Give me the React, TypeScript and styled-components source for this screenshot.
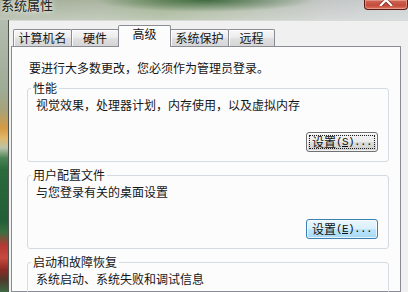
import styled, { createGlobalStyle } from "styled-components";

const GlobalStyle = createGlobalStyle`
  html, body {
    margin: 0;
    padding: 0;
  }
  body {
    width: 408px;
    height: 292px;
    overflow: hidden;
    background: #f0f0f0;
    font-family: "Noto Sans CJK SC", "Noto Sans", sans-serif;
    color: #161616;
  }
`;

const Window = styled.div`
  width: 408px;
  height: 292px;
  display: flex;
  flex-direction: column;
  overflow: hidden;
`;

const TitleBar = styled.div`
  height: 20px;
  flex: none;
  display: flex;
  align-items: flex-start;
  background:
    radial-gradient(110px 12px at 205px 0px, rgba(38, 88, 40, 0.8), rgba(38, 88, 40, 0) 100%),
    linear-gradient(180deg, rgba(255, 255, 255, 0) 0%, rgba(255, 255, 255, 0.3) 100%),
    linear-gradient(90deg, #a3ad98 0%, #aab5a0 25%, #9fb08f 40%, #b3bcab 60%, #c3c7c6 80%, #cbcfd0 100%);
`;

const Title = styled.div`
  font-size: 13px;
  line-height: 16px;
  margin: -3px 0 0 1px;
  color: #1c2320;
  text-shadow: 0 0 4px rgba(255, 255, 255, 0.9), 0 0 9px rgba(255, 255, 255, 0.7);
`;

const CloseButton = styled.div`
  margin-left: auto;
  width: 44px;
  height: 10px;
  box-sizing: border-box;
  display: flex;
  justify-content: center;
  align-items: flex-start;
  border: 1px solid #5c1a13;
  border-top: none;
  border-radius: 0 0 4px 4px;
  background: linear-gradient(180deg, #cf6a58 0%, #c54a3a 60%, #d97a62 100%);
  box-shadow: inset 0 0 0 1px rgba(255, 210, 200, 0.4);
`;

const Body = styled.div`
  flex: 1;
  min-height: 0;
  display: flex;
`;

const LeftFrame = styled.div`
  width: 8px;
  flex: none;
  border-right: 1px solid #4d554d;
  background: linear-gradient(
    180deg,
    #b4bcb0 0px,
    #9eab95 70px,
    #a7a27a 90px,
    #d49a45 108px,
    #e0b868 118px,
    #b9c2aa 128px,
    #4c8454 138px,
    #2a6a3c 150px,
    #235e36 200px,
    #3b6e40 212px,
    #b33834 225px,
    #c8493e 238px,
    #8a2a24 250px,
    #4e3a2c 260px,
    #3d6a44 272px
  );
`;

const Client = styled.div`
  flex: 1;
  min-width: 0;
  display: flex;
  flex-direction: column;
  background: #f0f0f0;
  border-top: 1px solid #d7dbd8;
  padding: 4px 7px 0 2px;
`;

const TabRow = styled.div`
  display: flex;
  align-items: flex-end;
  padding-left: 2px;
  position: relative;
  z-index: 1;
`;

const Tab = styled.div<{ $active?: boolean; $w: number }>`
  width: ${(p) => p.$w}px;
  box-sizing: border-box;
  margin-left: -1px;
  margin-bottom: ${(p) => (p.$active ? "-1px" : "0")};
  padding: 1px 0 ${(p) => (p.$active ? "6px" : "1px")};
  border: 1px solid #898c95;
  border-bottom: none;
  border-radius: 2px 2px 0 0;
  font-size: 12px;
  line-height: 14px;
  text-align: center;
  white-space: nowrap;
  position: relative;
  z-index: ${(p) => (p.$active ? 2 : 1)};
  background: ${(p) =>
    p.$active
      ? "#fcfcfc"
      : "linear-gradient(180deg, #f7f7f7 0%, #ececec 45%, #dfdfdf 55%, #d6d6d6 100%)"};
  box-shadow: ${(p) =>
    p.$active ? "none" : "inset 1px 1px 0 rgba(255, 255, 255, 0.85)"};

  &:first-child {
    margin-left: 0;
  }
`;

const Panel = styled.div`
  flex: 1;
  min-height: 0;
  display: flex;
  flex-direction: column;
  border: 1px solid #898c95;
  background: #fcfcfc;
`;

const Intro = styled.div`
  font-size: 12px;
  line-height: 14px;
  margin: 14px 0 0 17px;
  white-space: nowrap;
`;

const GroupBox = styled.fieldset`
  margin: 6px 11px 0 15px;
  padding: 3px 0 9px 8px;
  min-width: 0;
  border: 1px solid #d5dbe0;
  border-radius: 3px;
`;

const Legend = styled.legend`
  font-size: 12px;
  line-height: 14px;
  padding: 0 2px;
  margin-left: -5px;
`;

const Desc = styled.div`
  font-size: 12px;
  line-height: 14px;
  white-space: nowrap;
`;

const ButtonRow = styled.div`
  display: flex;
  justify-content: flex-end;
  padding-right: 10px;
  margin-top: 20px;
`;

const Button = styled.button<{ $focused?: boolean; $hover?: boolean }>`
  width: 72px;
  height: 20px;
  box-sizing: border-box;
  padding: 0;
  display: flex;
  align-items: center;
  justify-content: center;
  font-family: "Noto Sans CJK SC", "Noto Sans", sans-serif;
  font-size: 12px;
  line-height: 14px;
  color: #111;
  border: 1px solid ${(p) => (p.$hover ? "#3c7fb1" : "#707070")};
  border-radius: 3px;
  background: ${(p) =>
    p.$hover
      ? "linear-gradient(180deg, #eaf6fd 0%, #d9f0fc 50%, #bee6fd 50%, #a7d9f5 100%)"
      : "linear-gradient(180deg, #f2f2f2 0%, #ebebeb 50%, #dddddd 50%, #cfcfcf 100%)"};
  box-shadow: inset 0 0 0 1px rgba(255, 255, 255, 0.7);
  outline: ${(p) => (p.$focused ? "1px dotted #1a1a1a" : "none")};
  outline-offset: -4px;
`;

const Mnemonic = styled.span`
  font-family: "Liberation Mono", monospace;
  font-size: 11px;
  letter-spacing: -0.6px;
`;

const tabs = [
  { label: "计算机名", w: 59 },
  { label: "硬件", w: 48 },
  { label: "高级", w: 53, active: true },
  { label: "系统保护", w: 59 },
  { label: "远程", w: 47 },
];

type Group = {
  title: string;
  desc: string;
  key?: string;
  focused?: boolean;
  hover?: boolean;
};

const groups: Group[] = [
  {
    title: "性能",
    desc: "视觉效果，处理器计划，内存使用，以及虚拟内存",
    key: "S",
    focused: true,
  },
  {
    title: "用户配置文件",
    desc: "与您登录有关的桌面设置",
    key: "E",
    hover: true,
  },
  {
    title: "启动和故障恢复",
    desc: "系统启动、系统失败和调试信息",
  },
];

export default function App() {
  return (
    <>
      <GlobalStyle />
      <Window>
        <TitleBar>
          <Title>系统属性</Title>
          <CloseButton>
            <svg width="14" height="6" viewBox="0 0 14 6">
              <path
                d="M1 -6 L13 6 M13 -6 L1 6"
                stroke="#4a120c"
                strokeWidth="4"
                strokeOpacity="0.5"
              />
              <path d="M1 -6 L13 6 M13 -6 L1 6" stroke="#ffffff" strokeWidth="2.2" />
            </svg>
          </CloseButton>
        </TitleBar>
        <Body>
          <LeftFrame />
          <Client>
            <TabRow>
              {tabs.map((t) => (
                <Tab key={t.label} $w={t.w} $active={t.active}>
                  {t.label}
                </Tab>
              ))}
            </TabRow>
            <Panel>
              <Intro>要进行大多数更改，您必须作为管理员登录。</Intro>
              {groups.map((g) => (
                <GroupBox key={g.title}>
                  <Legend>{g.title}</Legend>
                  <Desc>{g.desc}</Desc>
                  {g.key && (
                    <ButtonRow>
                      <Button $focused={g.focused} $hover={g.hover}>
                        设置
                        <Mnemonic>
                          (<u>{g.key}</u>)...
                        </Mnemonic>
                      </Button>
                    </ButtonRow>
                  )}
                </GroupBox>
              ))}
            </Panel>
          </Client>
        </Body>
      </Window>
    </>
  );
}
